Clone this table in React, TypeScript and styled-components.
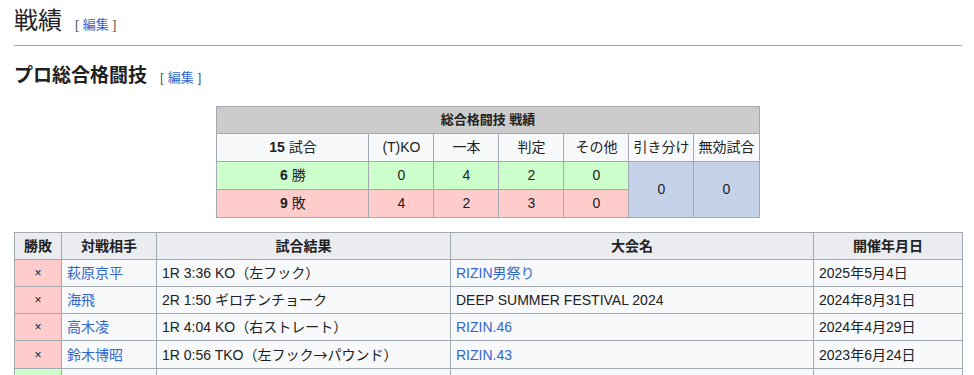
import styled, { createGlobalStyle } from "styled-components";

const GlobalStyle = createGlobalStyle`
  body {
    margin: 0;
    background: #ffffff;
    color: #202122;
    font-family: "Liberation Sans", "Noto Sans CJK JP", sans-serif;
  }
`;

type Result = "win" | "loss";

type Fight = {
  result: Result;
  opponent: string;
  detail: React.ReactNode;
  event: string;
  eventLink: boolean;
  date: string;
};

const Cjk = styled.span`
  font-family: "Noto Sans CJK JP", sans-serif;
`;

const fights: Fight[] = [
  { result: "loss", opponent: "萩原京平", detail: "1R 3:36 KO（左フック）", event: "RIZIN男祭り", eventLink: true, date: "2025年5月4日" },
  { result: "loss", opponent: "海飛", detail: "2R 1:50 ギロチンチョーク", event: "DEEP SUMMER FESTIVAL 2024", eventLink: false, date: "2024年8月31日" },
  { result: "loss", opponent: "高木凌", detail: "1R 4:04 KO（右ストレート）", event: "RIZIN.46", eventLink: true, date: "2024年4月29日" },
  {
    result: "loss",
    opponent: "鈴木博昭",
    detail: (
      <>
        1R 0:56 TKO（左フック<Cjk>→</Cjk>パウンド）
      </>
    ),
    event: "RIZIN.43",
    eventLink: true,
    date: "2023年6月24日",
  },
];

const EditLink = () => (
  <Edit>
    <span>[</span>
    <a>編集</a>
    <span>]</span>
  </Edit>
);

const App = () => {
  return (
    <Page>
      <GlobalStyle />
      <H2>
        戦績
        <EditLink />
      </H2>
      <H3>
        プロ総合格闘技
        <EditLink />
      </H3>

      <RecordBox>
        <colgroup>
          <col style={{ width: 152 }} />
          {Array.from({ length: 6 }).map((_, i) => (
            <col key={i} style={{ width: 65 }} />
          ))}
        </colgroup>
        <tbody>
          <tr>
            <BoxHead colSpan={7}>総合格闘技 戦績</BoxHead>
          </tr>
          <tr>
            <BoxCell>
              <b>15</b> 試合
            </BoxCell>
            <BoxCell>(T)KO</BoxCell>
            <BoxCell>一本</BoxCell>
            <BoxCell>判定</BoxCell>
            <BoxCell>その他</BoxCell>
            <BoxCell>引き分け</BoxCell>
            <BoxCell>無効試合</BoxCell>
          </tr>
          <tr>
            <BoxCell tone="win">
              <b>6</b> 勝
            </BoxCell>
            <BoxCell tone="win">0</BoxCell>
            <BoxCell tone="win">4</BoxCell>
            <BoxCell tone="win">2</BoxCell>
            <BoxCell tone="win">0</BoxCell>
            <BoxCell tone="draw" rowSpan={2}>0</BoxCell>
            <BoxCell tone="draw" rowSpan={2}>0</BoxCell>
          </tr>
          <tr>
            <BoxCell tone="loss">
              <b>9</b> 敗
            </BoxCell>
            <BoxCell tone="loss">4</BoxCell>
            <BoxCell tone="loss">2</BoxCell>
            <BoxCell tone="loss">3</BoxCell>
            <BoxCell tone="loss">0</BoxCell>
          </tr>
        </tbody>
      </RecordBox>

      <FightTable>
        <colgroup>
          <col style={{ width: 47 }} />
          <col style={{ width: 95 }} />
          <col style={{ width: 294 }} />
          <col style={{ width: 363 }} />
          <col style={{ width: 149 }} />
        </colgroup>
        <thead>
          <tr>
            <Th>勝敗</Th>
            <Th>対戦相手</Th>
            <Th>試合結果</Th>
            <Th>大会名</Th>
            <Th>開催年月日</Th>
          </tr>
        </thead>
        <tbody>
          {fights.map((f, i) => (
            <tr key={i}>
              <ResultCell result={f.result}>{f.result === "loss" ? "×" : "○"}</ResultCell>
              <Td>
                <a>{f.opponent}</a>
              </Td>
              <Td>{f.detail}</Td>
              <Td>{f.eventLink ? <a>{f.event}</a> : f.event}</Td>
              <Td>{f.date}</Td>
            </tr>
          ))}
          <tr>
            <ResultCell result="win" />
            <Td />
            <Td />
            <Td />
            <Td />
          </tr>
        </tbody>
      </FightTable>
    </Page>
  );
};

const Page = styled.div`
  padding: 0 12px 0 14px;

  a {
    color: #3366cc;
    text-decoration: none;
    cursor: pointer;
  }
`;

const Edit = styled.span`
  display: inline-flex;
  gap: 4px;
  margin-left: 13px;
  font-size: 13px;
  font-weight: normal;
  color: #54595d;
  vertical-align: baseline;
`;

const H2 = styled.h2`
  margin: 5px 0 0;
  padding-bottom: 4px;
  font-size: 24px;
  line-height: 32px;
  font-weight: normal;
  border-bottom: 1px solid #a2a9b1;
`;

const H3 = styled.h3`
  margin: 16px 0 0;
  font-size: 19px;
  line-height: 28px;
  font-weight: bold;
`;

const RecordBox = styled.table`
  margin: 14px auto 0;
  width: 542px;
  table-layout: fixed;
  border-collapse: collapse;
  font-size: 14px;
  text-align: center;
`;

const BoxHead = styled.th`
  background: #cccccc;
  border: 1px solid #a2a9b1;
  padding: 3px 5px;
  line-height: 20px;
  font-weight: bold;
  font-size: 13px;
`;

const toneColors = {
  plain: "#f8f9fa",
  win: "#ccffcc",
  loss: "#ffcccc",
  draw: "#c5d2ea",
};

const BoxCell = styled.td<{ tone?: keyof typeof toneColors }>`
  background: ${(p) => toneColors[p.tone ?? "plain"]};
  border: 1px solid #a2a9b1;
  padding: 3px 4px;
  line-height: 21px;
  white-space: nowrap;

  b {
    font-weight: bold;
  }
`;

const FightTable = styled.table`
  margin-top: 14px;
  width: 948px;
  table-layout: fixed;
  border-collapse: collapse;
  font-size: 14px;
  background: #f8f9fa;
`;

const Th = styled.th`
  background: #eaecf0;
  border: 1px solid #a2a9b1;
  padding: 3px 5px;
  line-height: 20px;
  font-weight: bold;
  text-align: center;
`;

const Td = styled.td`
  border: 1px solid #a2a9b1;
  padding: 3px 5px;
  height: 20px;
  line-height: 20px;
  text-align: left;
  white-space: nowrap;
  overflow: hidden;
`;

const ResultCell = styled(Td)<{ result: Result }>`
  background: ${(p) => (p.result === "win" ? "#ccffcc" : "#ffcccc")};
  text-align: center;
  font-size: 12px;
`;

export default App;
